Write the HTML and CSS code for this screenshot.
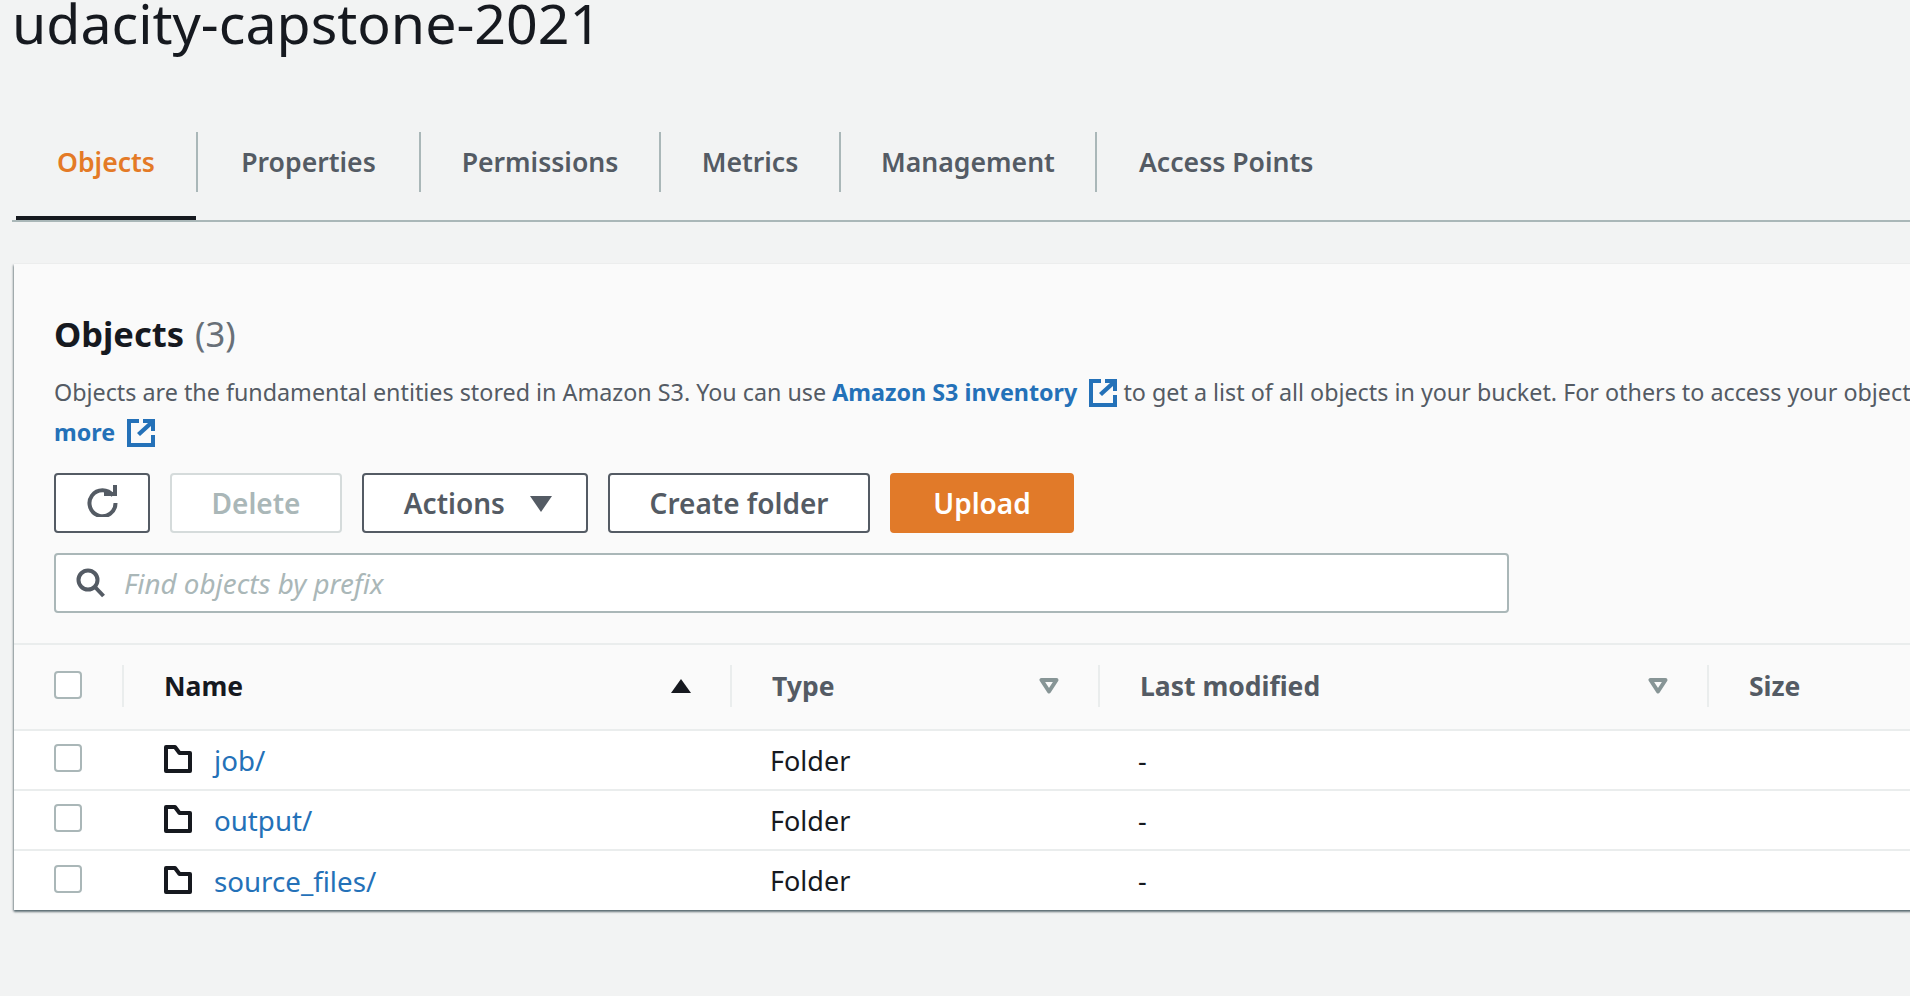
FILE: index.html
```html
<!DOCTYPE html>
<html lang="en">

<head>
    <meta charset="UTF-8">
    <meta name="viewport" content="width=device-width, initial-scale=1.0">
    <title>udacity-capstone-2021</title>
    <link rel="stylesheet" href="styles.css">
</head>

<body>
    <h1 class="bucket-title">udacity-capstone-2021</h1>

    <div class="tabs">
        <a href="#" class="tab active"><span>Objects</span></a>
        <a href="#" class="tab"><span>Properties</span></a>
        <a href="#" class="tab"><span>Permissions</span></a>
        <a href="#" class="tab"><span>Metrics</span></a>
        <a href="#" class="tab"><span>Management</span></a>
        <a href="#" class="tab"><span>Access Points</span></a>
    </div>

    <div class="panel">
        <div class="panel-head">
            <h2 class="panel-title">Objects <span class="count">(3)</span></h2>
            <p class="panel-desc">
                Objects are the fundamental entities stored in Amazon S3. You can use
                <a href="#" class="strong-link">Amazon S3 inventory
                    <svg class="ext-icon" viewBox="0 0 28 28"><path d="M12 2H2v24h24V16" fill="none" stroke="currentColor" stroke-width="4"/><path d="M16 0h12v12h-4V7L13 17l-3-3L21 4h-5z" fill="currentColor"/></svg></a>
                to get a list of all objects in your bucket. For others to access your objects, you'll need to explicitly grant them permissions. Learn<br>
                <a href="#" class="strong-link">more
                    <svg class="ext-icon" viewBox="0 0 28 28"><path d="M12 2H2v24h24V16" fill="none" stroke="currentColor" stroke-width="4"/><path d="M16 0h12v12h-4V7L13 17l-3-3L21 4h-5z" fill="currentColor"/></svg></a>
            </p>

            <div class="toolbar">
                <button class="btn btn-refresh" aria-label="Refresh">
                    <svg class="refresh-icon" viewBox="0 0 32 32"><path d="M27 10.500A13 13 0 1 0 29.500 18" fill="none" stroke="currentColor" stroke-width="4"/><path d="M18 11h13V0h-4v7h-9z" fill="currentColor"/></svg>
                </button>
                <button class="btn btn-delete" disabled>Delete</button>
                <button class="btn btn-actions">Actions <span class="caret"></span></button>
                <button class="btn btn-create">Create folder</button>
                <button class="btn btn-upload">Upload</button>
            </div>

            <div class="search">
                <svg class="search-icon" viewBox="0 0 30 30"><circle cx="12" cy="12" r="9.500" fill="none" stroke="currentColor" stroke-width="4"/><path d="M19 19l8.500 9" fill="none" stroke="currentColor" stroke-width="4"/></svg>
                <input type="text" class="search-input" placeholder="Find objects by prefix">
            </div>
        </div>

        <div class="row head-row">
            <div class="cell check-cell"><span class="checkbox"></span></div>
            <div class="cell name-col sep">
                <span class="col-title dark">Name</span>
                <span class="sort-up"></span>
            </div>
            <div class="cell sep">
                <span class="col-title">Type</span>
                <svg class="filter-icon" viewBox="0 0 20 16"><path d="M2.500 2h15L10 13.500z" fill="none" stroke="currentColor" stroke-width="4" stroke-linejoin="round"/></svg>
            </div>
            <div class="cell sep">
                <span class="col-title">Last modified</span>
                <svg class="filter-icon" viewBox="0 0 20 16"><path d="M2.500 2h15L10 13.500z" fill="none" stroke="currentColor" stroke-width="4" stroke-linejoin="round"/></svg>
            </div>
            <div class="cell sep"><span class="col-title">Size</span></div>
        </div>

        <div class="row body-row">
            <div class="cell check-cell"><span class="checkbox"></span></div>
            <div class="cell name-cell">
                <svg class="folder-icon" viewBox="0 0 28 28"><path d="M2 2h9l4.500 6H26v18H2z" fill="none" stroke="currentColor" stroke-width="4" stroke-linejoin="round"/></svg>
                <a href="#">job/</a>
            </div>
            <div class="cell">Folder</div>
            <div class="cell">-</div>
            <div class="cell"></div>
        </div>

        <div class="row body-row">
            <div class="cell check-cell"><span class="checkbox"></span></div>
            <div class="cell name-cell">
                <svg class="folder-icon" viewBox="0 0 28 28"><path d="M2 2h9l4.500 6H26v18H2z" fill="none" stroke="currentColor" stroke-width="4" stroke-linejoin="round"/></svg>
                <a href="#">output/</a>
            </div>
            <div class="cell">Folder</div>
            <div class="cell">-</div>
            <div class="cell"></div>
        </div>

        <div class="row body-row">
            <div class="cell check-cell"><span class="checkbox"></span></div>
            <div class="cell name-cell">
                <svg class="folder-icon" viewBox="0 0 28 28"><path d="M2 2h9l4.500 6H26v18H2z" fill="none" stroke="currentColor" stroke-width="4" stroke-linejoin="round"/></svg>
                <a href="#">source_files/</a>
            </div>
            <div class="cell">Folder</div>
            <div class="cell">-</div>
            <div class="cell"></div>
        </div>
    </div>
</body>

</html>
```

FILE: styles.css
```css
body {
    font-family: 'Noto Sans', sans-serif;
    margin: 0;
    height: 996px;
    overflow: hidden;
    background-color: #f2f3f3;
    color: #16191f;
}

.bucket-title {
    margin: 0 0 0 12px;
    height: 132px;
    font-size: 55.5px;
    font-weight: 400;
    line-height: 45px;
    white-space: nowrap;
}

.tabs {
    display: grid;
    grid-template-columns: 180px 223px 240px 180px 256px 1fr;
    margin-left: 12px;
    padding-left: 4px;
    border-bottom: 2px solid #aab7b8;
}

.tab {
    height: 88px;
    border-bottom: 4px solid transparent;
    box-sizing: border-box;
    color: #545b64;
    font-size: 26.6px;
    font-weight: 600;
    text-align: center;
    text-decoration: none;
}

.tab span {
    display: block;
    height: 60px;
    line-height: 60px;
    border-left: 2px solid #aab7b8;
}

.tab:first-child span {
    border-left: none;
}

.tab:last-child span {
    padding-left: 42px;
    text-align: left;
}

.tab.active {
    color: #e47a26;
    border-bottom-color: #16191f;
}

.panel {
    width: 2600px;
    margin: 42px 0 0 14px;
    background-color: #fafafa;
    box-shadow: 0 2px 2px rgba(0, 28, 36, 0.5), -1px 1px 2px rgba(0, 28, 36, 0.3);
}

.panel-head {
    padding: 42px 40px 30px;
    border-bottom: 2px solid #eaeded;
}

.panel-title {
    margin: 0 0 10px;
    font-size: 34.5px;
    font-weight: 700;
    line-height: 56px;
}

.count {
    margin-left: 2px;
    color: #687078;
    font-weight: 400;
}

.panel-desc {
    margin: 0 0 21px;
    color: #545b64;
    font-size: 23.3px;
    line-height: 40px;
    white-space: nowrap;
}

.strong-link {
    color: #2471b8;
    font-weight: 700;
    text-decoration: none;
}

.ext-icon {
    width: 28px;
    height: 28px;
    margin-left: 6px;
    vertical-align: -6px;
}

.toolbar {
    display: flex;
    gap: 20px;
    margin-bottom: 20px;
}

.btn {
    height: 60px;
    padding: 0;
    border: 2px solid #545b64;
    border-radius: 4px;
    background-color: #fff;
    color: #545b64;
    font-family: inherit;
    font-size: 28px;
    font-weight: 600;
}

.btn-refresh {
    width: 96px;
    padding-top: 4px;
}

.refresh-icon {
    width: 32px;
    height: 32px;
}

.btn-delete {
    width: 172px;
    border-color: #d5dbdb;
    color: #aab7b8;
}

.btn-actions {
    width: 226px;
    padding-left: 6px;
}

.caret {
    display: inline-block;
    width: 0;
    height: 0;
    margin-left: 18px;
    border-left: 11px solid transparent;
    border-right: 11px solid transparent;
    border-top: 16px solid #545b64;
    vertical-align: 2px;
}

.btn-create {
    width: 262px;
}

.btn-upload {
    width: 184px;
    border-color: #e17a29;
    background-color: #e17a29;
    color: #fff;
}

.search {
    display: flex;
    align-items: center;
    width: 1455px;
    height: 60px;
    box-sizing: border-box;
    padding-left: 20px;
    border: 2px solid #aab7b8;
    border-radius: 4px;
    background-color: #fff;
}

.search-icon {
    width: 30px;
    height: 30px;
    flex-shrink: 0;
    color: #545b64;
}

.search-input {
    flex-grow: 1;
    margin-left: 18px;
    padding: 0;
    border: none;
    outline: none;
    font-family: inherit;
    font-size: 27.8px;
    font-style: italic;
}

.search-input::placeholder {
    color: #aab7b8;
    opacity: 1;
}

.row {
    display: grid;
    grid-template-columns: 108px 608px 368px 609px 1fr;
    align-items: center;
}

.head-row {
    height: 84px;
    border-bottom: 2px solid #eaeded;
}

.body-row {
    height: 58px;
    background-color: #fff;
    border-bottom: 2px solid #eaeded;
    font-size: 27px;
}

.body-row:last-child {
    height: 59px;
    border-bottom: none;
}

.cell {
    display: flex;
    align-items: center;
    justify-content: space-between;
    padding: 0 30px 0 40px;
}

.cell.sep {
    height: 42px;
    margin-top: -2px;
    border-left: 2px solid #eaeded;
}

.checkbox {
    display: block;
    width: 28px;
    height: 28px;
    box-sizing: border-box;
    margin-bottom: 4px;
    border: 2px solid #aab7b8;
    border-radius: 4px;
    background-color: #fff;
}

.col-title {
    color: #545b64;
    font-size: 26.5px;
    font-weight: 700;
}

.col-title.dark {
    color: #16191f;
}

.sort-up {
    width: 0;
    height: 0;
    margin-right: 9px;
    border-left: 10px solid transparent;
    border-right: 10px solid transparent;
    border-bottom: 14px solid #16191f;
}

.filter-icon {
    width: 20px;
    height: 16px;
    margin-right: 9px;
    color: #879596;
}

.name-cell {
    justify-content: flex-start;
    gap: 22px;
    padding-left: 42px;
}

.folder-icon {
    width: 28px;
    height: 28px;
    color: #16191f;
    margin-bottom: 2px;
}

.name-cell a {
    color: #2471b8;
    font-size: 27.7px;
    text-decoration: none;
}
```
